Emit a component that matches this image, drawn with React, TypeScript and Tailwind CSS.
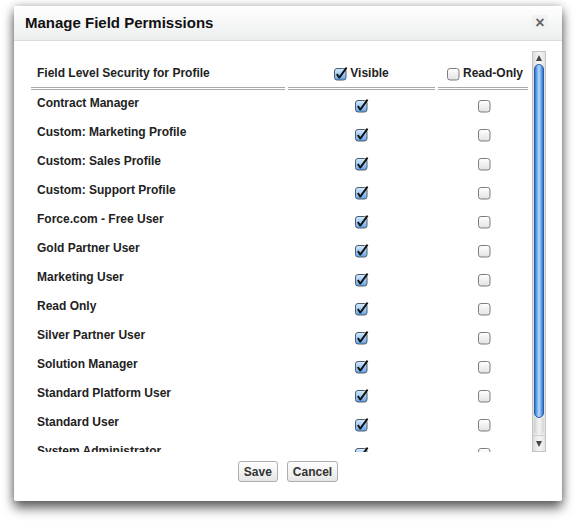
import React from 'react';

const profiles = [
  'Contract Manager',
  'Custom: Marketing Profile',
  'Custom: Sales Profile',
  'Custom: Support Profile',
  'Force.com - Free User',
  'Gold Partner User',
  'Marketing User',
  'Read Only',
  'Silver Partner User',
  'Solution Manager',
  'Standard Platform User',
  'Standard User',
  'System Administrator',
];

const Checkbox = ({ checked }: { checked: boolean }) => (
  <svg width="14" height="14" viewBox="0 0 14 14" className="shrink-0">
    <defs>
      <linearGradient id="cbOn" x1="0" y1="0" x2="0" y2="1">
        <stop offset="0" stopColor="#d6ebfd" />
        <stop offset="0.5" stopColor="#9fccf5" />
        <stop offset="1" stopColor="#5fa3e6" />
      </linearGradient>
      <linearGradient id="cbOff" x1="0" y1="0" x2="0" y2="1">
        <stop offset="0" stopColor="#ffffff" />
        <stop offset="1" stopColor="#e2e2e2" />
      </linearGradient>
    </defs>
    <rect
      x="0.5"
      y="1.5"
      width="11.5"
      height="11.5"
      rx="2.5"
      fill={checked ? 'url(#cbOn)' : 'url(#cbOff)'}
      stroke={checked ? '#4d5b6b' : '#7d7d7d'}
    />
    {checked && (
      <path d="M2.8 7 L5.3 10.6 L12.6 0.6" fill="none" stroke="#111" strokeWidth="1.9" strokeLinejoin="round" />
    )}
  </svg>
);

const Scrollbar = () => (
  <div className="flex h-full w-[14px] flex-col border border-[#c4c4c4] bg-[linear-gradient(to_right,#dcdcdc,#f7f7f7_50%,#e4e4e4)]">
    {/* up arrow */}
    <div className="flex h-[12px] items-center justify-center">
      <div className="h-0 w-0 border-x-[3.5px] border-b-[6px] border-x-transparent border-b-[#444]" />
    </div>
    {/* thumb */}
    <div className="mx-[1px] h-[354px] rounded-full border border-[#2a5fa8] bg-[linear-gradient(to_right,#2f74cf,#7db5ef_30%,#b9dafa_50%,#6fa9ea_75%,#2f74cf)]" />
    <div className="mx-[1px] h-[17px] rounded-b-full bg-[linear-gradient(to_right,#cfcfcf,#f4f4f4_50%,#d6d6d6)]" />
    <div className="flex flex-1 items-center justify-center border-t border-[#d0d0d0]">
      <div className="h-0 w-0 border-x-[3.5px] border-t-[6px] border-x-transparent border-t-[#444]" />
    </div>
  </div>
);

const App = () => {
  return (
    <div className="h-[523px] w-[576px] overflow-hidden bg-white pl-[14px] pt-[6px] font-['Liberation_Sans',Arial,sans-serif] text-[#222]">
      <div className="flex h-[495px] w-[548px] flex-col rounded-[2px] bg-white shadow-[0_7px_12px_rgba(0,0,0,0.6),0_0_10px_rgba(0,0,0,0.25)]">
        {/* header */}
        <div className="flex h-[35px] shrink-0 items-center justify-between border-b border-[#d9dddd] bg-[linear-gradient(to_bottom,#ffffff,#eceeee)] pl-[11px] pr-[14px]">
          <h1 className="text-[15px] font-bold text-[#111]">Manage Field Permissions</h1>
          <button className="flex h-[16px] w-[16px] items-center justify-center rounded-[2px] bg-[#f1f2f2] pb-[1px] text-[16px] font-bold leading-none text-[#666]">
            ×
          </button>
        </div>

        {/* body */}
        <div className="mt-[10px] flex h-[401px] shrink-0 pl-[17px]">
          <div className="h-full w-[497px] overflow-hidden text-[12px] font-bold">
            <div className="flex h-[39px] gap-[3px]">
              <div className="flex w-[254px] items-end border-b-[3px] border-double border-[#aaa] pb-[6px] pl-[6px] leading-[15px]">
                Field Level Security for Profile
              </div>
              <div className="flex w-[147px] items-end justify-center gap-[2px] border-b-[3px] border-double border-[#aaa] pb-[6px] leading-[15px]">
                <Checkbox checked />
                <span>Visible</span>
              </div>
              <div className="flex w-[90px] items-end justify-center gap-[2px] border-b-[3px] border-double border-[#aaa] pb-[6px] pl-[4px] leading-[15px]">
                <Checkbox checked={false} />
                <span>Read-Only</span>
              </div>
            </div>
            {profiles.map((p) => (
              <div key={p} className="flex h-[29px] shrink-0 gap-[3px]">
                <div className="w-[254px] pl-[6px] pt-[6px] leading-[15px]">{p}</div>
                <div className="flex w-[147px] justify-center pt-[9px]">
                  <Checkbox checked />
                </div>
                <div className="flex w-[90px] justify-center pl-[4px] pt-[9px]">
                  <Checkbox checked={false} />
                </div>
              </div>
            ))}
          </div>
          <div className="ml-[4px] h-full">
            <Scrollbar />
          </div>
        </div>

        {/* footer */}
        <div className="mt-[9px] flex justify-center gap-[9px]">
          <button className="h-[21px] rounded-[3px] border border-[#adadad] bg-[linear-gradient(to_bottom,#ffffff,#e6e6e6)] px-[5px] text-[12px] font-bold text-[#333]">
            Save
          </button>
          <button className="h-[21px] rounded-[3px] border border-[#adadad] bg-[linear-gradient(to_bottom,#ffffff,#e6e6e6)] px-[5px] text-[12px] font-bold text-[#333]">
            Cancel
          </button>
        </div>
      </div>
    </div>
  );
};

export default App;
